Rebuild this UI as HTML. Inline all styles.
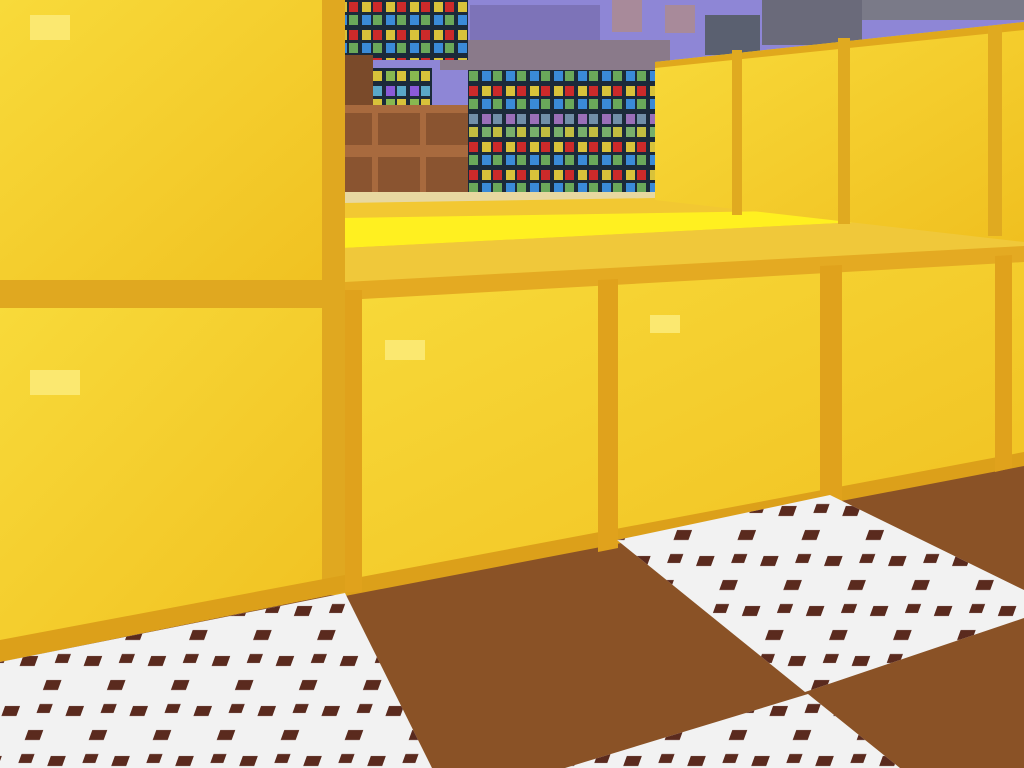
<!DOCTYPE html>
<html><head><meta charset="utf-8"><style>html,body{margin:0;padding:0;width:1024px;height:768px;overflow:hidden;background:#8a5226}</style></head>
<body>
<svg width="1024" height="768" viewBox="0 0 1024 768" xmlns="http://www.w3.org/2000/svg">
<defs>
<pattern id="grid" width="24" height="28" patternUnits="userSpaceOnUse">
<rect width="24" height="28" fill="#1b2a3a"/>
<rect x="2" y="2" width="9" height="10" fill="#d8c23a"/><rect x="13" y="2" width="9" height="10" fill="#cc2a2a"/>
<rect x="2" y="15" width="9" height="10" fill="#3a8ad8"/><rect x="13" y="15" width="9" height="10" fill="#6aa85a"/>
</pattern>
<pattern id="grid2" width="24" height="28" patternUnits="userSpaceOnUse">
<rect width="24" height="28" fill="#1b2a3a"/>
<rect x="2" y="2" width="9" height="10" fill="#8a5ad8"/><rect x="13" y="2" width="9" height="10" fill="#5aa8c8"/>
<rect x="2" y="15" width="9" height="10" fill="#88b850"/><rect x="13" y="15" width="9" height="10" fill="#d8c23a"/>
</pattern>
<pattern id="choc" width="64" height="50" patternUnits="userSpaceOnUse" patternTransform="skewX(-20)">
<rect x="6" y="6" width="15" height="10" fill="#5a2a1e"/><rect x="38" y="30" width="15" height="10" fill="#5a2a1e"/><rect x="40" y="4" width="13" height="9" fill="#5a2a1e"/>
</pattern>
<linearGradient id="g1" x1="0" y1="0" x2="1" y2="1"><stop offset="0" stop-color="#f8da3a"/><stop offset="1" stop-color="#f0c020"/></linearGradient>
</defs>
<!-- sky & background -->
<rect x="340" y="0" width="684" height="250" fill="#8e86d6"/>
<rect x="470" y="5" width="130" height="50" fill="#7d73b8"/>
<rect x="440" y="40" width="230" height="30" fill="#8a7a8a"/>
<rect x="612" y="0" width="30" height="32" fill="#a88a9a"/>
<rect x="665" y="5" width="30" height="28" fill="#a88a9a"/>
<rect x="762" y="0" width="100" height="45" fill="#6a6a7a"/>
<rect x="705" y="15" width="55" height="40" fill="#5a6070"/>
<rect x="862" y="0" width="162" height="20" fill="#7a7a88"/>
<!-- colorful blocks -->
<rect x="343" y="0" width="125" height="60" fill="url(#grid)"/>
<rect x="372" y="68" width="60" height="40" fill="url(#grid2)"/>
<rect x="468" y="70" width="190" height="125" fill="url(#grid)"/>
<rect x="468" y="110" width="190" height="30" fill="url(#grid2)" opacity=".8"/>
<!-- crates -->
<rect x="343" y="55" width="30" height="145" fill="#7a4a2a"/>
<rect x="343" y="105" width="125" height="95" fill="#8a5430"/>
<rect x="343" y="145" width="125" height="12" fill="#a86a3e"/>
<rect x="343" y="105" width="125" height="8" fill="#a86a3e"/>
<rect x="372" y="105" width="6" height="95" fill="#a86a3e"/><rect x="420" y="105" width="6" height="95" fill="#a86a3e"/>
<rect x="343" y="192" width="325" height="12" fill="#e8d8a0"/>
<!-- gold floor -->
<polygon points="343,203 655,198 1024,238 1024,258 345,290" fill="#f2c832"/>
<polygon points="343,218 845,210 860,222 343,248" fill="#fff020"/>
<polygon points="343,248 860,222 1024,232 1024,258 345,290" fill="#f0c83a"/>
<!-- right upper wall -->
<polygon points="655,62 1024,22 1024,242 655,200" fill="url(#g1)"/>
<polygon points="655,62 1024,22 1024,30 655,68" fill="#e0a81c"/>
<rect x="732" y="50" width="10" height="165" fill="#e0aa20"/>
<rect x="838" y="38" width="12" height="186" fill="#e0aa20"/>
<rect x="988" y="26" width="14" height="210" fill="#e0aa20"/>
<!-- lower row -->
<polygon points="345,290 1024,252 1024,462 345,592" fill="url(#g1)"/>
<polygon points="345,282 1024,246 1024,262 345,300" fill="#e4aa22"/>
<polygon points="345,580 1024,452 1024,466 345,596" fill="#dca01a"/>
<polygon points="598,280 618,279 618,548 598,552" fill="#e0a21c"/>
<polygon points="820,266 842,265 842,505 820,510" fill="#e0a21c"/>
<polygon points="995,256 1012,255 1012,468 995,472" fill="#e0a21c"/>
<polygon points="345,290 362,290 362,592 345,592" fill="#e0a21c"/>
<!-- left column -->
<rect x="0" y="0" width="345" height="300" fill="url(#g1)"/>
<polygon points="0,300 345,300 345,592 0,662" fill="url(#g1)"/>
<rect x="0" y="280" width="345" height="28" fill="#e0a820"/>
<rect x="322" y="0" width="23" height="595" fill="#e0a820"/>
<polygon points="0,640 345,575 345,592 0,662" fill="#dca01a"/>
<rect x="30" y="15" width="40" height="25" fill="#fbe870"/>
<rect x="30" y="370" width="50" height="25" fill="#fbe870"/>
<rect x="385" y="340" width="40" height="20" fill="#fbe870"/>
<rect x="650" y="315" width="30" height="18" fill="#fbe870"/>
<!-- floor -->
<polygon points="0,662 345,593 432,768 0,768" fill="#f2f2f2"/>
<polygon points="0,662 345,593 432,768 0,768" fill="url(#choc)"/>
<polygon points="617,540 830,495 1024,590 1024,618 805,692" fill="#f2f2f2"/>
<polygon points="617,540 830,495 1024,590 1024,618 805,692" fill="url(#choc)"/>
<polygon points="565,768 808,694 900,768" fill="#f2f2f2"/>
<polygon points="565,768 808,694 900,768" fill="url(#choc)"/>
</svg>
</body></html>
